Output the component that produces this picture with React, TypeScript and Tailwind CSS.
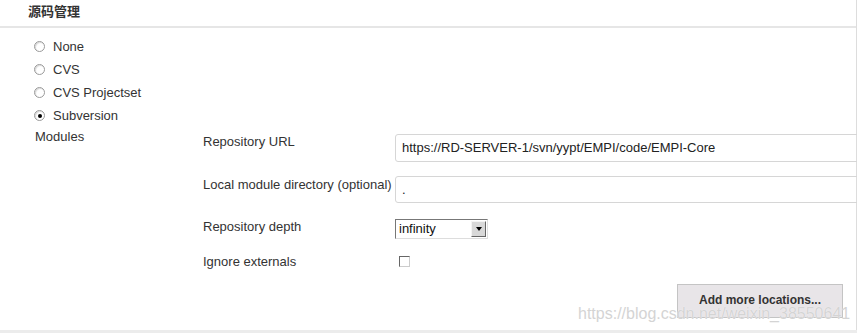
const font = { fontFamily: '"Liberation Sans", Arial, "Noto Sans CJK SC", sans-serif' };

function Radio({ label, checked }: { label: string; checked?: boolean }) {
  return (
    <div className="flex h-[23px] items-center">
      <span className="flex h-[11px] w-[11px] items-center justify-center rounded-full border border-[#9a9a9a] bg-white shadow-[inset_1px_1px_1px_rgba(0,0,0,0.15)]">
        {checked && <span className="h-[4px] w-[4px] rounded-full bg-black" />}
      </span>
      <span className="ml-[8px] text-[13px] text-[#333]">{label}</span>
    </div>
  );
}

export default function App() {
  return (
    <div className="relative h-[333px] w-[857px] overflow-hidden bg-white" style={font}>
      <div className="h-[330px] border-r border-[#ddd]">
        {/* header */}
        <div className="flex h-[28px] items-center border-b-2 border-[#e6e6e6] pb-[2px] pl-[28px]">
          <span className="text-[13px] font-bold text-[#333]">源码管理</span>
        </div>

        {/* scm choices */}
        <div className="pl-[34px] pt-[7px]">
          <Radio label="None" />
          <Radio label="CVS" />
          <Radio label="CVS Projectset" />
          <Radio label="Subversion" checked />
        </div>

        {/* modules */}
        <div className="flex">
          <div className="w-[203px] pl-[35px] text-[13px] leading-[20px] text-[#333]">Modules</div>
          <div className="flex flex-1 flex-col pt-[7px] text-[13px] text-[#333]">
            <div className="flex h-[28px]">
              <div className="w-[192px] leading-[15px]">Repository URL</div>
              <div className="-mr-[20px] flex flex-1 items-center rounded-[3px] border border-[#d6d6d6] pl-[6px] text-[13px] text-[#222]">
                https://RD-SERVER-1/svn/yypt/EMPI/code/EMPI-Core
              </div>
            </div>
            <div className="mt-[14px] flex h-[27px]">
              <div className="w-[192px] pt-[1px] leading-[15px]">Local module directory (optional)</div>
              <div className="-mr-[20px] flex flex-1 items-center rounded-[3px] border border-[#d6d6d6] pl-[6px] text-[13px] text-[#222]">
                .
              </div>
            </div>
            <div className="mt-[16px] flex h-[20px]">
              <div className="w-[192px] leading-[15px]">Repository depth</div>
              <div className="flex h-[20px] w-[93px] border border-t-[#777] border-l-[#777] border-r-[#ddd] border-b-[#ddd] bg-white">
                <span className="flex-1 pl-[3px] text-[13px] leading-[17px] text-[#111]">infinity</span>
                <span className="m-[1px] flex w-[15px] items-center justify-center border border-t-[#f4f4f4] border-l-[#f4f4f4] border-r-[#666] border-b-[#666] bg-[#d8d8d8]">
                  <span className="h-0 w-0 border-x-[3px] border-t-[4px] border-x-transparent border-t-black" />
                </span>
              </div>
            </div>
            <div className="mt-[15px] flex h-[15px]">
              <div className="w-[192px] leading-[15px]">Ignore externals</div>
              <span className="ml-[4px] mt-[2px] h-[11px] w-[11px] border border-t-[#666] border-l-[#666] border-r-[#ccc] border-b-[#ccc] bg-white" />
            </div>
            <div className="mt-[15px] flex justify-end pr-[13px]">
              <div className="flex h-[34px] w-[166px] items-center justify-center border border-[#c4c4c4] bg-[#e8e5e8] pb-[2px] text-[12px] font-bold text-[#333]">
                Add more locations...
              </div>
            </div>
          </div>
        </div>
      </div>
      <div className="h-[3px] bg-[#ececec]" />

      {/* watermark */}
      <div className="pointer-events-none absolute left-[578px] top-[304px] text-[16px] leading-[20px] text-[#d4d4d4] [text-shadow:0_0_1px_rgba(255,255,255,0.9)]">
        https://blog.csdn.net/weixin_38550641
      </div>
    </div>
  );
}
